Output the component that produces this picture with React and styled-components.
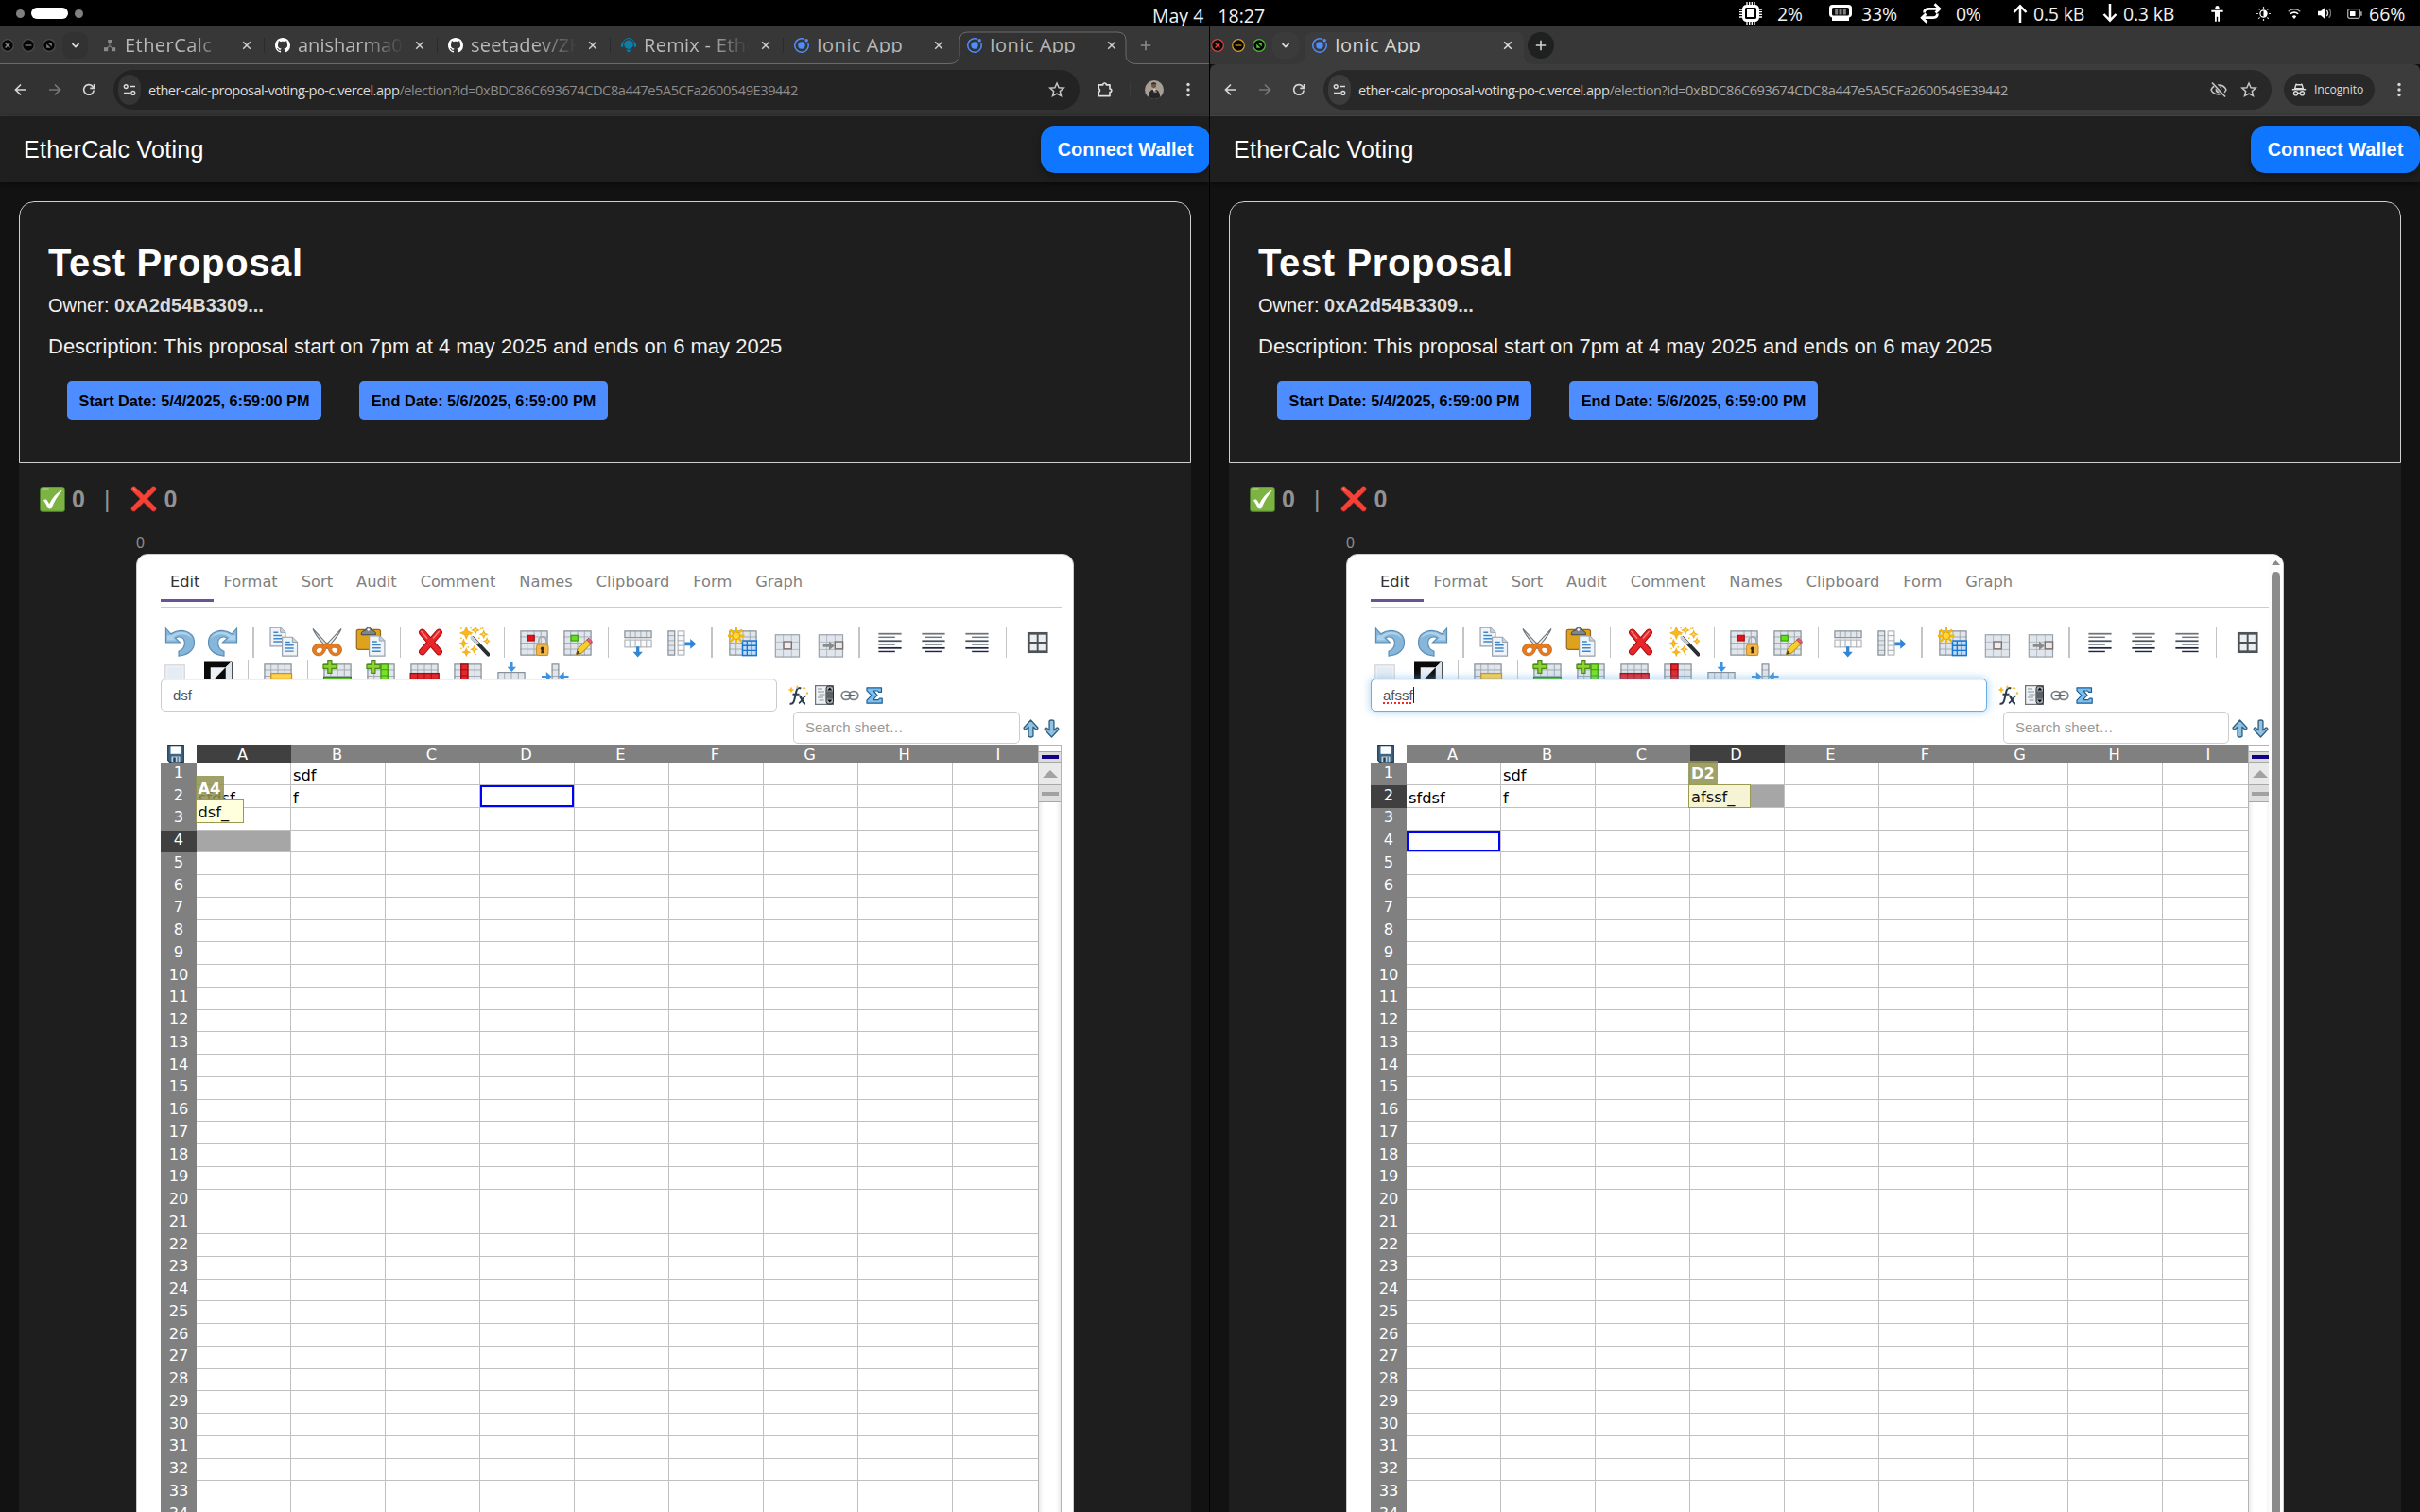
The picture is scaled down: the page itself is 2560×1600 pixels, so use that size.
import React from "react";
import styled, { createGlobalStyle, css } from "styled-components";

const Global = createGlobalStyle`
  *, *::before, *::after { box-sizing: border-box; }
  html, body { margin: 0; padding: 0; background: #000; overflow: hidden; }
  svg { display: block; flex: none; }
`;

const uiFont = `"Open Sans", "Noto Sans", sans-serif`;
const appFont = `"Liberation Sans", Arial, sans-serif`;
const sheetFont = `"DejaVu Sans", Verdana, sans-serif`;

/* ---------- desktop ---------- */

const Desktop = styled.div`
  width: 2560px;
  height: 1600px;
  display: flex;
  flex-direction: column;
  overflow: hidden;
  background: #000;
`;

const TopBar = styled.div`
  height: 28px;
  flex: none;
  display: flex;
  align-items: center;
  background: #000;
  color: #f2f2f2;
  font: 400 19.5px/28px ${uiFont};
  white-space: pre;
`;

const Workspaces = styled.div`
  width: 1219px;
  padding-left: 17px;
  display: flex;
  align-items: center;
  gap: 7px;
`;

const Dot = styled.span`
  width: ${(p) => (p.$active ? 39 : 9)}px;
  height: ${(p) => (p.$active ? 12 : 9)}px;
  border-radius: 6px;
  background: ${(p) => (p.$active ? "#fff" : "#808080")};
`;

const Clock = styled.div`
  width: 621px;
  line-height: 33px;
  height: 28px;
  display: flex;
  gap: 15px;
`;

const StatusItem = styled.div`
  width: ${(p) => p.$w}px;
  height: 28px;
  display: flex;
  align-items: center;
  gap: ${(p) => p.$gap || 0}px;
  line-height: 27px;
  letter-spacing: ${(p) => p.$ls || 0}px;
`;

const Windows = styled.div`
  flex: 1;
  display: flex;
  min-height: 0;
`;

const Window = styled.div`
  width: 1280px;
  display: flex;
  flex-direction: column;
  overflow: hidden;
  background: #121212;
  border-right: ${(p) => (p.$active ? "none" : "1px solid #000")};
`;

/* ---------- browser chrome ---------- */

const TabStrip = styled.div`
  height: 40px;
  flex: none;
  display: flex;
  align-items: stretch;
  background: #373737;
  border-bottom: ${(p) => (p.$active ? "none" : "1px solid #6a6a6a")};
`;

const WindowControls = styled.div`
  width: 66px;
  padding-left: 1px;
  display: flex;
  align-items: center;
  gap: 8px;
`;

const SearchTabs = styled.div`
  width: ${(p) => (p.$active ? 28 : 27)}px;
  height: 28px;
  margin: 6px ${(p) => (p.$active ? 4 : 5)}px 0 0;
  border-radius: 9px;
  background: ${(p) => (p.$active ? "#3b3b3b" : "#323232")};
  display: flex;
  align-items: center;
  justify-content: center;
`;

const TabBox = styled.div`
  width: ${(p) => p.$w}px;
  display: flex;
  align-items: center;
  padding-left: 10px;
  position: relative;
  ${(p) =>
    p.$sep &&
    css`
      &::after {
        content: "";
        width: 1px;
        height: 16px;
        margin-left: 9px;
        background: #2b2b2b;
      }
    `}
`;

const TabShape = styled.svg`
  position: absolute;
  left: -10px;
  top: 0;
`;

const TabTitle = styled.div`
  width: ${(p) => p.$w}px;
  height: 28px;
  margin-left: 8px;
  overflow: hidden;
  white-space: pre;
  color: ${(p) => (p.$bright ? "#d6d6d6" : "#b8b8b8")};
  font: 400 20px/28px ${uiFont};
  letter-spacing: ${(p) => p.$ls ?? 0.5}px;
  position: relative;
  ${(p) =>
    p.$fade &&
    css`
      mask-image: linear-gradient(90deg, #000 62%, transparent 100%);
    `}
  span {
    display: block;
    height: 22px;
    overflow: hidden;
  }
`;

const TabClose = styled.div`
  width: 18px;
  margin-left: 8px;
  display: flex;
  justify-content: center;
  position: relative;
`;

const NewTab = styled.div`
  width: 28px;
  height: 28px;
  margin: 6px 0 0 ${(p) => (p.$active ? 4 : 1)}px;
  border-radius: 14px;
  background: ${(p) => (p.$active ? "#1f2020" : "transparent")};
  display: flex;
  align-items: center;
  justify-content: center;
`;

const AddressBar = styled.div`
  height: 55px;
  flex: none;
  display: flex;
  align-items: center;
  background: ${(p) => (p.$active ? "#3c3c3c" : "#323232")};
  border-bottom: 1px solid ${(p) => (p.$active ? "#4c4c4c" : "#393939")};
  border-radius: ${(p) => (p.$active ? "7px 7px 0 0" : "0")};
`;

const NavButtons = styled.div`
  width: 120px;
  padding-left: 12px;
  display: flex;
  gap: 16px;
`;

const Omnibox = styled.div`
  width: ${(p) => p.$w}px;
  height: 42px;
  border-radius: 21px;
  padding: 0 14px 0 5px;
  background: ${(p) => (p.$active ? "#282828" : "#232323")};
  display: flex;
  align-items: center;
`;

const SiteInfo = styled.div`
  width: 24px;
  height: 32px;
  border-radius: 12px / 14px;
  background: ${(p) => (p.$active ? "#3c3c3c" : "#353535")};
  display: flex;
  align-items: center;
  justify-content: center;
`;

const Url = styled.div`
  flex: 1;
  padding-left: 8px;
  white-space: nowrap;
  color: ${(p) => (p.$active ? "#a6a6a6" : "#8c8c8c")};
  font: 400 14.6px/20px ${uiFont};
  letter-spacing: -0.43px;
  b {
    font-weight: 400;
    color: #dcdcdc;
    letter-spacing: -0.5px;
  }
`;

const OmniActions = styled.div`
  display: flex;
  gap: 12px;
`;

const ToolActions = styled.div`
  flex: 1;
  display: flex;
  align-items: center;
  padding-left: ${(p) => p.$pl}px;
`;

const ToolSep = styled.span`
  width: 1px;
  height: 16px;
  margin: 0 15px 0 16px;
  background: #3b3b3b;
`;

const Gap = styled.span`
  width: ${(p) => p.$w}px;
`;

const Incognito = styled.div`
  width: 96px;
  height: 34px;
  border-radius: 17px;
  padding-left: 8px;
  display: flex;
  align-items: center;
  gap: 8px;
  background: #282828;
  color: #d8d8d8;
  font: 400 12.25px/34px ${uiFont};
  letter-spacing: -0.1px;
`;

/* ---------- web page ---------- */

const AppHeader = styled.div`
  height: 70px;
  flex: none;
  display: flex;
  align-items: center;
  justify-content: space-between;
  padding-left: 25px;
  background: #1f1f1f;
  color: #fff;
  font: 400 25px/30px ${appFont};
  letter-spacing: 0.28px;
  box-shadow: 0 2px 6px rgba(0, 0, 0, 0.45);
`;

const WalletButton = styled.div`
  height: 50px;
  width: 179px;
  margin-right: ${(p) => (p.$active ? 0 : -1)}px;
  border-radius: 15px;
  background: #0f76ff;
  box-shadow: 0 4px 10px rgba(0, 0, 0, 0.3);
  text-align: center;
  font: 700 20px/50px ${appFont};
  letter-spacing: 0;
`;

const Page = styled.div`
  width: 1240px;
  margin: 20px 0 0 20px;
  flex: 1;
  min-height: 0;
  overflow: hidden;
  background: #1e1e1e;
  border-radius: 16px 16px 0 0;
  font-family: ${appFont};
`;

const Proposal = styled.div`
  height: 277px;
  border: 1px solid #d0d0d0;
  border-radius: 16px 16px 0 0;
  padding: 40px 30px 0;
  color: #f0f0f0;
`;

const Title = styled.div`
  font-weight: 700;
  font-size: 40px;
  line-height: 48px;
  letter-spacing: 0.625px;
  color: #fff;
`;

const Owner = styled.div`
  margin-top: 9px;
  font-size: 20px;
  line-height: 24px;
  b {
    color: #dadada;
  }
`;

const Description = styled.div`
  margin-top: 18px;
  font-size: 22px;
  line-height: 28px;
`;

const Dates = styled.div`
  margin: 22px 0 0 20px;
  display: flex;
  gap: 40px;
`;

const DateBadge = styled.div`
  width: ${(p) => p.$w}px;
  height: 41px;
  border-radius: 5px;
  background: #4d8dff;
  color: #000;
  text-align: center;
  white-space: nowrap;
  font-weight: 700;
  font-size: 16.25px;
  line-height: 42px;
`;

const Votes = styled.div`
  height: 30px;
  margin: 23px 0 0 22px;
  display: flex;
  align-items: center;
  color: #929292;
  font-weight: 700;
  font-size: 25px;
  line-height: 30px;
`;

const VoteText = styled.span`
  margin: 0 ${(p) => p.$r || 0}px 0 ${(p) => p.$l || 0}px;
  font-weight: ${(p) => (p.$thin ? 400 : 700)};
`;

const Counter = styled.div`
  margin: 22px 0 1px 124px;
  font-size: 16px;
  line-height: 20px;
  color: #8c8c8c;
`;

const Panel = styled.div`
  width: 992px;
  height: 1030px;
  margin-left: 124px;
  border: 1px solid #ccc;
  border-radius: 12px;
  overflow: hidden;
  background: #fff;
  display: flex;
`;

const PanelBody = styled.div`
  width: ${(p) => (p.$scroll ? 975 : 990)}px;
  overflow: hidden;
  padding-left: 25px;
`;

const PageScroll = styled.div`
  width: 15px;
  background: #fcfcfc;
  display: flex;
  flex-direction: column;
  align-items: center;
  padding: 6px 1px 0 0;
`;

const Thumb = styled.div`
  width: 9px;
  height: 1010px;
  margin-top: 7px;
  border-radius: 5px;
  background: #8b8b8b;
`;

const Menu = styled.div`
  width: 953px;
  height: 56px;
  border-bottom: 1px solid #ccc;
  display: flex;
`;

const MenuTab = styled.div`
  height: 50px;
  padding: 19px 15px 0 10px;
  border-bottom: 3px solid ${(p) => (p.$on ? "#6a5293" : "transparent")};
  color: ${(p) => (p.$on ? "#333" : "#808080")};
  font: 400 16.25px/20px ${sheetFont};
`;

const Toolbar = styled.div`
  width: 961px;
  height: 75px;
  margin-left: -8px;
  padding-top: 19px;
  overflow: hidden;
`;

const ToolRow = styled.div`
  height: 35px;
  padding-left: ${(p) => p.$pl || 0}px;
  display: flex;
`;

const Tool = styled.div`
  width: 46px;
  height: 35px;
  display: flex;
  align-items: center;
  justify-content: center;
`;

const ToolDivider = styled.div`
  width: ${(p) => p.$w}px;
  height: 35px;
  display: flex;
  justify-content: center;
  align-items: center;
  &::after {
    content: "";
    width: 1.25px;
    height: 33px;
    background: #c4c4c4;
  }
`;

const FormulaRow = styled.div`
  height: 35px;
  display: flex;
  align-items: center;
  gap: 7px;
  position: relative;
`;

const Field = styled.div`
  width: ${(p) => p.$w}px;
  height: ${(p) => p.$h}px;
  margin-right: ${(p) => p.$mr || 0}px;
  padding-left: 12px;
  border: 1px solid ${(p) => (p.$focus ? "#66afe9" : "#ccc")};
  border-radius: 5px;
  background: #fff;
  box-shadow: inset 0 1px 1px rgba(0, 0, 0, 0.075)
    ${(p) => (p.$focus ? ", 0 0 10px rgba(102,175,233,0.6)" : "")};
  display: flex;
  align-items: center;
  color: ${(p) => (p.$hint ? "#999" : "#555")};
  font: 400 15px/18px ${appFont};
`;

const Spell = styled.span`
  text-decoration: underline dotted #f22 1.5px;
  text-underline-offset: 3px;
`;

const Caret = styled.span`
  width: 1px;
  height: 17px;
  background: #222;
`;

const SearchRow = styled.div`
  height: 35px;
  padding-left: 669px;
  display: flex;
  align-items: flex-start;
`;

const Arrows = styled.div`
  margin: 8px 0 0 3px;
  display: flex;
  gap: 5px;
`;

/* ---------- spreadsheet ---------- */

const SheetWrap = styled.div`
  width: 953px;
  display: flex;
`;

const Sheet = styled.div`
  width: 928px;
  position: relative;
  font: 400 16.25px/19px ${sheetFont};
`;

const SheetRow = styled.div`
  height: ${(p) => p.$h}px;
  display: grid;
  grid-template-columns: 38px repeat(8, 100px) 90px;
`;

const Corner = styled.div`
  padding-left: 7px;
`;

const ColHead = styled.div`
  background: ${(p) => (p.$on ? "#404040" : "#808080")};
  color: #fff;
  text-align: center;
  padding-right: ${(p) => (p.$last ? 0 : 3)}px;
  padding-left: ${(p) => (p.$last ? 6 : 0)}px;
  line-height: 21px;
  height: 19px;
`;

const RowHead = styled.div`
  background: ${(p) => (p.$on ? "#404040" : "#808080")};
  color: #fff;
  text-align: center;
  line-height: ${(p) => p.$lh}px;
`;

const Cell = styled.div`
  border-right: ${(p) => (p.$last ? "none" : "1px solid #c0c0c0")};
  border-bottom: 1px solid #c0c0c0;
  padding: 4px 0 0 2px;
  color: #000;
  overflow: hidden;
  white-space: nowrap;
  background: ${(p) => (p.$on ? "#a6a6a6" : "#fff")};
  box-shadow: ${(p) => (p.$peer ? "inset 0 0 0 2px #0000ff" : "none")};
`;

const EditHint = styled.div`
  position: absolute;
  left: ${(p) => p.$x}px;
  top: ${(p) => p.$y}px;
`;

const HintName = styled.div`
  width: ${(p) => p.$w}px;
  height: 25px;
  padding-left: 3px;
  background: rgba(144, 144, 80, 0.86);
  color: #fff;
  font-weight: 700;
  line-height: 28px;
`;

const HintText = styled.div`
  width: ${(p) => p.$w}px;
  height: 25px;
  padding-left: 2px;
  border: 1px solid #999950;
  background: ${(p) => p.$bg};
  color: #111;
  line-height: 26px;
`;

const SheetScroll = styled.div`
  width: 25px;
  border: solid #b4b4b4;
  border-width: 0 1px;
  background: linear-gradient(90deg, #ececec 0, #fff 5px, #fff 18px, #ececec 100%);
`;

const ScrollPart = styled.div`
  height: ${(p) => p.$h}px;
  border-bottom: 1px solid #a8a8a8;
  border-top: ${(p) => (p.$top ? "1px solid #b4b4b4" : "none")};
  background: ${(p) => p.$bg};
  display: flex;
  align-items: center;
  justify-content: center;
`;

const ScrollBar = styled.span`
  width: 18px;
  height: 4px;
  background: ${(p) => p.$c};
`;

/* ---------- drawings ---------- */

const Svg = ({ w = 16, h = w, vb, children, ...r }) => (
  <svg width={w} height={h} viewBox={vb || `0 0 ${w} ${h}`} fill="none" {...r}>
    {children}
  </svg>
);

const Control = ({ kind, active }) => {
  const c = active ? { x: "#e0443e", m: "#dea123", z: "#4fbf30" }[kind] : "#4e4e4e";
  return (
    <Svg w={14} vb="0 0 14 14">
      <circle cx="7" cy="7" r="6.3" fill="#050505" stroke={c} strokeWidth="1.2" />
      {kind === "x" && <path d="M4.6 4.6l4.8 4.8M9.4 4.6L4.6 9.4" stroke={active ? c : "#8a8a8a"} strokeWidth="1.4" />}
      {kind === "m" && <path d="M3.6 7h6.8" stroke={active ? "#b07c12" : "#6a6a6a"} strokeWidth="1.5" />}
      {kind === "z" && <path d="M5.4 4.2h4.4v4.4zM4.2 5.4v4.4h4.4z" fill={active ? c : "#777"} />}
    </Svg>
  );
};

const Chevron = () => (
  <Svg w={12}><path d="M2.5 4.2L6 7.6l3.5-3.4" stroke="#dedede" strokeWidth="1.8" /></Svg>
);
const Cross = ({ c = "#cfcfcf" }) => (
  <Svg w={10}><path d="M1.2 1.2l7.6 7.6M8.8 1.2L1.2 8.8" stroke={c} strokeWidth="1.5" /></Svg>
);
const Plus = ({ c }) => (
  <Svg w={12}><path d="M6 .8v10.4M.8 6h10.4" stroke={c} strokeWidth="1.6" /></Svg>
);

const Favicon = ({ kind }) => {
  if (kind === "github")
    return (
      <Svg w={16}>
        <path
          fill="#fff"
          fillRule="evenodd"
          d="M8 0C3.58 0 0 3.58 0 8c0 3.54 2.29 6.53 5.47 7.59.4.07.55-.17.55-.38 0-.19-.01-.82-.01-1.49-2.01.37-2.53-.49-2.69-.94-.09-.23-.48-.94-.82-1.13-.28-.15-.68-.52-.01-.53.63-.01 1.08.58 1.23.82.72 1.21 1.87.87 2.33.66.07-.52.28-.87.51-1.07-1.78-.2-3.64-.89-3.64-3.95 0-.87.31-1.59.82-2.15-.08-.2-.36-1.02.08-2.12 0 0 .67-.21 2.2.82.64-.18 1.32-.27 2-.27s1.36.09 2 .27c1.53-1.04 2.2-.82 2.2-.82.44 1.1.16 1.92.08 2.12.51.56.82 1.27.82 2.15 0 3.07-1.87 3.75-3.65 3.95.29.25.54.73.54 1.48 0 1.07-.01 1.93-.01 2.2 0 .21.15.46.55.38A8.01 8.01 0 0016 8c0-4.42-3.58-8-8-8z"
        />
      </Svg>
    );
  if (kind === "remix")
    return (
      <Svg w={16}>
        <circle cx="8" cy="7.2" r="4.800" fill="#0a7ea8" />
        <path d="M1.600 8V7a6.400 6.400 0 0112.800 0v1" stroke="#0a7ea8" strokeWidth="1" />
        <rect x="0" y="5.500" width="2.200" height="4.500" rx="1" fill="#0a7ea8" />
        <rect x="13.800" y="5.500" width="2.200" height="4.500" rx="1" fill="#0a7ea8" />
        <path d="M5 12.800h6l-3 2.600z" fill="#0a7ea8" />
      </Svg>
    );
  if (kind === "tree")
    return (
      <Svg w={16}>
        <path d="M8 4v5M8 8.500L4 12M8 8.500l4 3.500" stroke="#777" strokeWidth="1.200" />
        <rect x="6.200" y="2" width="3.800" height="4" fill="#8a8a8a" />
        <rect x="2" y="10.200" width="4.200" height="4" fill="#8a8a8a" />
        <rect x="10" y="10.200" width="4.200" height="4" fill="#8a8a8a" />
      </Svg>
    );
  return (
    <Svg w={16}>
      <circle cx="8" cy="8" r="3.700" fill="#4d8dff" />
      <path d="M11.200 1.600A7.200 7.200 0 1014.500 5" stroke="#4d8dff" strokeWidth="1.500" />
      <circle cx="13.200" cy="2.800" r="1.700" fill="#4d8dff" />
    </Svg>
  );
};

const Back = ({ c, flip }) => (
  <Svg w={20}>
    <path
      transform={flip ? "translate(20 0) scale(-1 1)" : undefined}
      d="M16 10H4.800M10 4.500L4.500 10l5.500 5.500"
      stroke={c}
      strokeWidth="1.700"
    />
  </Svg>
);
const Reload = ({ c }) => (
  <Svg w={20}>
    <path d="M15.200 10.500A5.300 5.300 0 1113.800 6.300l1.400 1.400" stroke={c} strokeWidth="1.700" />
    <path d="M15.600 4v4.300h-4.300" stroke={c} strokeWidth="1.700" />
  </Svg>
);
const Tune = () => (
  <Svg w={14}>
    <circle cx="3.200" cy="3.600" r="1.900" stroke="#dcdcdc" strokeWidth="1.400" />
    <circle cx="10.800" cy="10.400" r="1.900" stroke="#dcdcdc" strokeWidth="1.400" />
    <path d="M7 3.600h6M1 10.400h6" stroke="#dcdcdc" strokeWidth="1.500" />
  </Svg>
);
const Star = () => (
  <Svg w={20}>
    <path d="M10 3l2.100 4.700 5.100.5-3.850 3.400 1.150 5L10 14l-4.500 2.600 1.150-5L2.800 8.200l5.100-.5z" stroke="#c4c4c4" strokeWidth="1.500" />
  </Svg>
);
const Puzzle = () => (
  <Svg w={20}>
    <path d="M3.200 4.800H7.700a1.800 1.800 0 013.600 0H15v4.200a1.800 1.800 0 010 3.600v4H3.200v-4.200a1.900 1.900 0 000-3.600z" stroke="#dedede" strokeWidth="1.700" strokeLinejoin="round" />
  </Svg>
);
const Dots = () => (
  <Svg w={20}>
    {[4.5, 10, 15.5].map((y) => <circle key={y} cx="10" cy={y} r="1.700" fill="#d8d8d8" />)}
  </Svg>
);
const Avatar = () => (
  <Svg w={20}>
    <clipPath id="av"><circle cx="10" cy="10" r="10" /></clipPath>
    <g clipPath="url(#av)">
      <rect width="20" height="20" fill="#a79f94" />
      <path d="M3.500 20c.5-7 2-10.500 6.500-10.500S16 13 16.500 20z" fill="#23262a" />
      <circle cx="9.600" cy="5.400" r="2.500" fill="#6b5548" />
      <path d="M6.800 4.600c0-3 5.600-3 5.600 0l-1-.8H8z" fill="#1c1a1a" />
      <path d="M8.200 9l2 4 1.800-4z" fill="#c9c5c0" />
      <path d="M9 13l3-3 1 3z" fill="#8f7767" />
    </g>
  </Svg>
);
const EyeOff = () => (
  <Svg w={20}>
    <path d="M2 10c3-6.500 13-6.500 16 0-3 6.500-13 6.500-16 0z" stroke="#c4c4c4" strokeWidth="1.600" />
    <circle cx="10" cy="10" r="3.400" fill="#c4c4c4" />
    <path d="M3.500 1.500l14 16" stroke="#282828" strokeWidth="4" />
    <path d="M3 2.500l14 15" stroke="#c4c4c4" strokeWidth="1.700" />
  </Svg>
);
const Spy = () => (
  <Svg w={16}>
    <path d="M5 2.200l1.300.6h3.400l1.300-.6 1.400 4.600H3.600z" stroke="#dcdcdc" strokeWidth="1.400" strokeLinejoin="round" />
    <path d="M.8 7.700h14.400" stroke="#dcdcdc" strokeWidth="1.500" />
    <circle cx="4.600" cy="11.800" r="2.100" stroke="#dcdcdc" strokeWidth="1.400" />
    <circle cx="11.400" cy="11.800" r="2.100" stroke="#dcdcdc" strokeWidth="1.400" />
    <path d="M6.700 11.500h2.600" stroke="#dcdcdc" strokeWidth="1.300" />
  </Svg>
);

const Cpu = () => (
  <Svg w={24}>
    <rect x="4.500" y="4.500" width="15" height="15" rx="3" stroke="#fff" strokeWidth="3" />
    <rect x="8" y="8" width="8" height="8" fill="#fff" />
    <path d="M8 0v4M10.700 0v4M13.300 0v4M16 0v4M8 20v4M10.700 20v4M13.300 20v4M16 20v4M0 8h4M0 10.700h4M0 13.300h4M0 16h4M20 8h4M20 10.700h4M20 13.300h4M20 16h4" stroke="#fff" strokeWidth="1.300" />
  </Svg>
);
const Ram = () => (
  <Svg w={24}>
    <path d="M3.500 3h17A3.500 3.500 0 0124 6.500V13a3.500 3.500 0 01-3 3.400V20H3v-3.600A3.500 3.500 0 010 13V6.500A3.500 3.500 0 013.500 3z" fill="#fff" />
    <rect x="3" y="6" width="18" height="8.500" rx="1.500" fill="#0a0a0a" />
    <path d="M7.700 7.500v6M12 7.500v6M16.300 7.500v6" stroke="#808080" strokeWidth="3" />
  </Svg>
);
const Swap = () => (
  <Svg w={23} h={22}>
    <path id="swapArrow" d="M4.500 10.500C4.500 7.500 6.500 6.300 10 6.300h10.500M15.500 1.300l5.300 4.900-4.300 4.300" stroke="#fff" strokeWidth="2.700" />
    <path transform="rotate(180 11.500 11)" d="M4.500 10.500C4.500 7.500 6.500 6.300 10 6.300h10.500M15.500 1.300l5.300 4.900-4.300 4.300" stroke="#fff" strokeWidth="2.700" />
  </Svg>
);
const NetArrow = ({ down }) => (
  <Svg w={16} h={20}>
    <path
      transform={down ? "translate(0 20) scale(1 -1)" : undefined}
      d="M8 20V3M1.500 9L8 2.200 14.500 9"
      stroke="#fff"
      strokeWidth="2.500"
    />
  </Svg>
);
const Person = () => (
  <Svg w={13} h={17}>
    <circle cx="6.500" cy="2.200" r="2.100" fill="#fff" />
    <path d="M.3 4.800h12.400v2H9v10H7.200v-5H5.800v5H4v-10H.3z" fill="#fff" />
  </Svg>
);
const Sun = () => (
  <Svg w={15}>
    <circle cx="7.500" cy="7.500" r="3.600" stroke="#fff" strokeWidth="1.200" />
    <path d="M7.500 3.900a3.600 3.600 0 010 7.200z" fill="#fff" />
    <g stroke="#ccc" strokeWidth="1.200">
      <path d="M7.500 0v2M7.500 13v2M0 7.500h2M13 7.500h2M2.200 2.200l1.400 1.400M11.400 11.400l1.400 1.400M12.800 2.200l-1.400 1.400M3.600 11.400l-1.400 1.400" />
    </g>
  </Svg>
);
const Wifi = () => (
  <Svg w={14} h={12}>
    <path d="M.7 4.200a9 9 0 0112.600 0" stroke="#a8a8a8" strokeWidth="1.500" />
    <path d="M2.900 6.800a5.800 5.800 0 018.200 0" stroke="#fff" strokeWidth="1.600" />
    <path d="M7 12L4.800 9.400a3.200 3.200 0 014.400 0z" fill="#fff" />
  </Svg>
);
const Volume = () => (
  <Svg w={14} h={12}>
    <path d="M0 3.800h3L7 .3v11.400L3 8.200H0z" fill="#fff" />
    <path d="M9.200 3a4 4 0 010 6" stroke="#ddd" strokeWidth="1.500" />
    <path d="M11.700 1.200a7 7 0 010 9.600" stroke="#777" strokeWidth="1.300" />
  </Svg>
);
const Battery = () => (
  <Svg w={16} h={11}>
    <rect x=".7" y=".7" width="12.600" height="9.600" rx="1.800" stroke="#aaa" strokeWidth="1.300" />
    <rect x="3" y="3" width="5.500" height="5" fill="#fff" />
    <path d="M14.900 3.300v4.400" stroke="#aaa" strokeWidth="1.600" />
  </Svg>
);

const CheckEmoji = () => (
  <Svg w={27}>
    <rect x=".3" y=".3" width="26.400" height="26.400" rx="2.600" fill="#5c9e31" />
    <rect x="1" y="0.600" width="25" height="25" rx="2.400" fill="#7cb342" />
    <path d="M2 3.200c3-1.600 6-1.400 7.500-1" stroke="#aed581" strokeWidth="1.200" />
    <path d="M4 14.500c1.600-1.600 3.200-1 4 .2l2.200 3.600C13 12.500 17 7.200 22.500 4.200c.8-.3 1 .3.600.9-4 5-7.500 10-10.400 17.400-.6 1.200-3.600 1.200-4.200 0C7.500 20 6 17.300 4 14.500z" fill="#fff" />
  </Svg>
);
const CrossEmoji = () => (
  <Svg w={28}>
    <path d="M3.500 3.500l21 21M24.500 3.500l-21 21" stroke="#d32f2f" strokeWidth="5.600" strokeLinecap="round" />
    <path d="M3.500 3.200l21 21M24.500 3.200l-21 21" stroke="#f44336" strokeWidth="4.600" strokeLinecap="round" />
    <path d="M3.200 2.600l2.600 2.600" stroke="#ff8a80" strokeWidth="1.200" strokeLinecap="round" />
  </Svg>
);

/* Grid used as the base of most spreadsheet tool icons */
const Grid = ({ x = 1, y = 4, w = 30, h = 27, c = 4, r = 4, line = "#a2a9b1", fill = "#e0e6ec", edge = "#878e96" }) => {
  let d = "";
  for (let i = 1; i < c; i++) d += `M${x + (w * i) / c} ${y}v${h}`;
  for (let i = 1; i < r; i++) d += `M${x} ${y + (h * i) / r}h${w}`;
  return (
    <>
      <rect x={x} y={y} width={w} height={h} fill={fill} />
      <path d={d} stroke={line} strokeWidth="1" />
      <rect x={x + 0.5} y={y + 0.5} width={w - 1} height={h - 1} stroke={edge} strokeWidth="1.200" />
    </>
  );
};

const AlignIcon = ({ a }) => (
  <>
    {[25, 18, 25, 18, 25, 18].map((w, i) => (
      <rect
        key={i}
        x={a === "l" ? 4 : a === "r" ? 29 - w : 16.5 - w / 2}
        y={6.5 + i * 3.900}
        width={w}
        height={i % 2 ? 1.5 : 1.8}
        fill={i < 2 ? "#6d747b" : i < 4 ? "#4a5260" : "#1f2740"}
      />
    ))}
  </>
);

const GreenPlus = () => (
  <path d="M5.500 0h4.200v5H15v4.200H9.700v5H5.500v-5H.5V5h5z" fill="#8fd42c" stroke="#4c8a1c" strokeWidth="1.300" />
);

const toolArt = {
  undo: (
    <>
      <path d="M1 1.500V17h15.500l-5-5c4-2.500 10-1 10 5.500 0 5-2.500 7.500-6.500 9v5C25 30.500 32 25.500 32 17 32 4.500 17 .5 6.500 7.500z" fill="#86b6da" stroke="#5b8db5" strokeWidth="1.200" />
      <path d="M2.500 4v5l5 0C16 2.500 27 5 29.500 13 25 7 15 6 9 11.500l3 3H2.500z" fill="#b9d9ef" opacity=".8" />
    </>
  ),
  copy: (
    <>
      {[[1, 0], [14, 10.500]].map(([x, y]) => (
        <g key={x} transform={`translate(${x} ${y})`}>
          <path d="M.6.600h11L17 6v15H.6z" fill="#eef4fa" stroke="#94a0ac" strokeWidth="1.200" />
          <path d="M11.600.6V6H17" fill="#c9d4de" stroke="#94a0ac" strokeWidth="1" />
          <path d="M4 6h5M4 9.300h9M4 12.600h9M4 15.900h9" stroke="#3f86c8" strokeWidth="1.500" />
        </g>
      ))}
    </>
  ),
  cut: (
    <>
      <path d="M.5 2L19 21.500l-3 1.800C10 16 3 9 .5 2z" fill="#d8dde1" stroke="#70777d" strokeWidth="1.100" />
      <path d="M31.500 2L13 21.500l3 1.800C22 16 29 9 31.500 2z" fill="#eef0f2" stroke="#70777d" strokeWidth="1.100" />
      <g stroke="#b5560c" strokeWidth=".7">
        <path fill="#e77b1e" fillRule="evenodd" d="M16 17l4 2.500c6-3 12 0 12 5.500s-7 8-11 5-3-6.500-5-7-1 4-5 7-11 .5-11-5 6-8.500 12-5.500zM4 26c0 3 4 3.500 6 1s1-4-1-4.500-5 1-5 3.500zM28 26c0 3-4 3.500-6 1s-1-4 1-4.500 5 1 5 3.500z" />
      </g>
    </>
  ),
  paste: (
    <>
      <rect x=".8" y="3" width="26" height="21.500" rx="2" fill="#dea21f" stroke="#96691a" strokeWidth="1.300" />
      <path d="M6 8.500V6.500C7 3.500 11 4.500 11 3c0-3.500 5.500-3.500 5.500 0 0 1.500 4 .5 5 3.500v2z" fill="#7d868d" stroke="#3d4347" strokeWidth="1" />
      <circle cx="13.700" cy="3" r="1.300" fill="#fff" />
      <g transform="translate(14 9)">
        <path d="M.6.600h11L17.400 6v16.500H.6z" fill="#eef4fa" stroke="#94a0ac" strokeWidth="1.200" />
        <path d="M11.600.6V6h5.600" fill="#c9d4de" stroke="#94a0ac" strokeWidth="1" />
        <path d="M4 7h5M4 10.500h9M4 14h9M4 17.500h9" stroke="#3f86c8" strokeWidth="1.500" />
      </g>
    </>
  ),
  del: (
    <>
      <path d="M6.500 6l18 21M24.500 6l-18 21" stroke="#a80d10" strokeWidth="7.600" strokeLinecap="round" />
      <path d="M6.500 6l18 21M24.500 6l-18 21" stroke="#e8262a" strokeWidth="5.500" strokeLinecap="round" />
      <path d="M5.500 5l6 7M24.500 5l-6 7" stroke="#ff8484" strokeWidth="1.500" strokeLinecap="round" />
    </>
  ),
  wand: (
    <>
      <path d="M14 12l17 18" stroke="#2b2f33" strokeWidth="4" strokeLinecap="round" />
      <path d="M13 11.500l6 6" stroke="#c8cdd2" strokeWidth="3.600" strokeLinecap="round" />
      {[[7, 6.500, 6], [17, 3.500, 3.500], [26, 8, 3.500], [4, 18, 4], [15.500, 24.500, 3], [29.500, 15.500, 3], [7, 27.500, 3.500]].map(([x, y, s], i) => (
        <path key={i} d={`M${x} ${y - s}l${s * 0.3} ${s * 0.7} ${s * 0.7} ${s * 0.3}-${s * 0.7} ${s * 0.3}-${s * 0.3} ${s * 0.7}-${s * 0.3}-${s * 0.7}-${s * 0.7}-${s * 0.3} ${s * 0.7}-${s * 0.3}z`} fill={i % 3 ? "#ffe28a" : "#fbb91e"} stroke="#f3b321" strokeWidth="1.300" />
      ))}
      {[[1.500, 1.500], [12, 1], [23, 2], [1.500, 12], [12, 8], [21, 12], [9, 22], [17, 30], [1.500, 23.500], [25, 1.500]].map(([x, y], i) => (
        <circle key={i} cx={x} cy={y} r=".9" fill="#f6bd2c" />
      ))}
    </>
  ),
  lock: (
    <>
      <Grid />
      <rect x="8.800" y="9" width="7.500" height="6" fill="#e0141a" stroke="#9a0c10" />
      <path d="M21 20v-5a4.200 4.200 0 018.400 0v5" stroke="#a4aab0" strokeWidth="1.800" />
      <rect x="18.500" y="19" width="13" height="12" rx="2.500" fill="#f0b64a" stroke="#c58a26" />
      <circle cx="25" cy="23.500" r="1.900" fill="#3c2a08" />
      <path d="M24.100 24h1.800l.6 4.500h-3z" fill="#3c2a08" />
    </>
  ),
  pencil: (
    <>
      <Grid />
      <rect x="8.800" y="9" width="7.500" height="6" fill="#63e01a" stroke="#2f8a0c" />
      <path d="M14.500 30l1.500-6 11-11 4.500 4.500-11 11z" fill="#f6cf2d" stroke="#a5781a" />
      <path d="M26 14l2-2 4 4-2 2z" fill="#ef5c7a" stroke="#b53a55" />
      <path d="M14.500 30l1.300-4.500 3 3.200z" fill="#4a3b22" />
    </>
  ),
  mergeDown: (
    <>
      <Grid y={4} h={8} r={1} c={5} />
      <Grid y={13.500} h={9} r={1} c={5} fill="#fafafa" edge="#b0b5ba" />
      <path d="M14 21.500h3.400V27H21l-5.300 6-5.300-6H14z" fill="#2f86d6" />
    </>
  ),
  splitRight: (
    <>
      <Grid x={1} y={4} w={8} h={27} c={1} r={5} />
      <Grid x={11.500} y={4} w={8} h={27} c={1} r={5} fill="#fafafa" edge="#b0b5ba" />
      <path d="M19.500 16.500h6V13l6.500 5.500-6.500 5.500v-3.700h-6z" fill="#2f86d6" />
    </>
  ),
  newGrid: (
    <>
      <Grid x={2} w={30} />
      <rect x="16.500" y="15" width="15.300" height="16" fill="#bfdcf5" stroke="#1a74d0" strokeWidth="1.600" />
      <path d="M16.500 20.300h15M16.500 25.600h15M21.500 15v16M26.500 15v16" stroke="#1a74d0" strokeWidth="1.400" />
      <path d="M9.500.5v18M.5 9.500h18M3 3l13 13M16 3L3 16" stroke="#f6b900" strokeWidth="2.600" />
      <circle cx="9.500" cy="9.500" r="4" fill="#ffd83a" stroke="#e89a00" />
    </>
  ),
  cellIn: (
    <>
      <Grid x={4.500} y={8} w={27} h={25} c={3} r={3} line="#b4bac1" edge="#9ca2a9" />
      <rect x="14" y="16" width="8.500" height="8" fill="#eeeeee" stroke="#7a6e6e" strokeWidth="1.400" />
    </>
  ),
  cellMove: (
    <>
      <Grid x={4.500} y={8} w={27} h={25} c={3} r={3} line="#b4bac1" edge="#9ca2a9" />
      <rect x="22.500" y="16" width="8.500" height="8" fill="#e8e8e8" stroke="#7a6e6e" strokeWidth="1.400" />
      <path d="M9.500 19h6.500v-3.500l6 5-6 5V22H9.500z" fill="#8a8a8a" />
    </>
  ),
  alignL: <AlignIcon a="l" />,
  alignC: <AlignIcon a="c" />,
  alignR: <AlignIcon a="r" />,
  border: (
    <>
      <rect x="7" y="7" width="19.500" height="20" fill="#eceff1" stroke="#4d5257" strokeWidth="2.800" />
      <path d="M16.700 7v20M7 17h20" stroke="#4d5257" strokeWidth="2" />
    </>
  ),
  blank: (
    <>
      <rect x="5.500" y="5.500" width="21" height="21" fill="#f2f5f9" stroke="#ccd1d7" strokeWidth="1.200" />
      <rect x="7.500" y="7.500" width="17" height="17" fill="#e6ecf3" />
    </>
  ),
  invert: (
    <>
      <path d="M.5 1h30.500L.5 31z" fill="#0a0a0a" />
      <path d="M31 1v30H.5z" fill="#dfe6ee" />
      <path d="M31 1.500v30" stroke="#444" strokeWidth="1" />
      <path d="M7.500 8H24L7.500 24z" fill="#eef1f5" />
      <path d="M24 8v17H7.500z" fill="#0a0a0a" />
    </>
  ),
  rowYellow: (
    <>
      <Grid />
      <rect x="8.500" y="14.500" width="22.500" height="6" fill="#ffd24d" stroke="#c8912a" strokeWidth="1.300" />
    </>
  ),
  addRow: (
    <>
      <Grid />
      <rect x="1" y="18.500" width="30" height="5" fill="#52c22a" stroke="#2e7d14" />
      <GreenPlus />
    </>
  ),
  addCol: (
    <>
      <Grid />
      <rect x="16" y="4.500" width="7.500" height="26" fill="#7be02a" stroke="#3c9a14" strokeWidth="1.300" />
      <path d="M16 10.500h7.500M16 17h7.500" stroke="#3c9a14" />
      <GreenPlus />
    </>
  ),
  delRow: (
    <>
      <Grid />
      <rect x=".7" y="14.500" width="31" height="6" fill="#e5262b" stroke="#960e12" strokeWidth="1.300" />
      <path d="M8.500 15v5M16 15v5M23.500 15v5" stroke="#960e12" />
    </>
  ),
  delCol: (
    <>
      <Grid />
      <rect x="8.500" y="4.500" width="7.500" height="26" fill="#e5262b" stroke="#960e12" strokeWidth="1.300" />
      <path d="M8.500 10.500H16M8.500 17H16" stroke="#960e12" />
    </>
  ),
  rowHide: (
    <>
      <Grid y={13} h={10} r={1} />
      <path d="M15 2h2.600v5.500h3.600L16.300 13l-4.900-5.500H15z" fill="#3d93e0" />
    </>
  ),
  colHide: (
    <>
      <Grid x={12.500} y={4} w={8} h={27} c={1} r={4} />
      <path d="M1.500 17h5v-4l6 5-6 5v-4h-5zM31 17h-5v-4l-6 5 6 5v-4h5z" fill="#3d93e0" />
    </>
  ),
};
toolArt.redo = <g transform="translate(32 0) scale(-1 1)">{toolArt.undo}</g>;

const ToolIcon = ({ name }) => (
  <Tool>
    <Svg w={32} h={34} vb="-0.500 0 33 34">
      {toolArt[name]}
    </Svg>
  </Tool>
);

const Fx = () => (
  <Svg w={21}>
    <path d="M1.500 19.800c3.500.5 4.500-2 5.500-7l1.300-6c.8-3.500 2.500-4.300 5-3.300M4.500 9.800h7" stroke="#2b3d4d" strokeWidth="2" />
    <path d="M11.500 11.500c2.300 0 3 8 6.500 8" stroke="#2b3d4d" strokeWidth="2.400" />
    <path d="M18.500 11.300c-3 1-4.500 6.500-7.500 8" stroke="#2b3d4d" strokeWidth="1.600" />
    <g fill="#fbb91e">
      <path d="M3 1.500l1.100 2.400L6.500 5 4.100 6.100 3 8.500 1.900 6.100-.5 5l2.400-1.100zM9.500 0l.7 1.500 1.500.7-1.500.6-.7 1.500-.6-1.500L7.400 2.200l1.500-.7zM16.500.8l.8 1.700 1.500.7-1.500.7-.8 1.600-.8-1.600-1.500-.7 1.500-.7zM20 6.500l.7 1.400 1 .7-1 .7-.7 1.200-.7-1.200-1-.7 1-.7z" />
    </g>
  </Svg>
);
const DocScroll = () => (
  <Svg w={20} h={21}>
    <rect x=".6" y=".6" width="18.800" height="19.800" fill="#eef1f4" stroke="#6b7278" strokeWidth="1.200" />
    <path d="M3 4h5M3 7h7M4.500 10h6M3 13h6M4.500 16h5" stroke="#8894a0" strokeWidth="1.200" />
    <rect x="12" y="1" width="7.500" height="19" rx="2.500" fill="#a3a9af" stroke="#25292d" strokeWidth="1" />
    <path d="M13.300 5.500L15.800 2.600l2.500 2.900zM13.300 15.500l2.500 2.900 2.500-2.900z" fill="#0c0d0e" />
    <rect x="12.500" y="6.500" width="6.500" height="8" fill="#5b6269" />
  </Svg>
);
const Chain = () => (
  <Svg w={20} h={12}>
    <rect x="1.200" y="1.700" width="9.500" height="8.600" rx="4.300" stroke="#7d8489" strokeWidth="1.800" />
    <rect x="9.300" y="1.700" width="9.500" height="8.600" rx="4.300" stroke="#7d8489" strokeWidth="1.800" />
    <path d="M5.500 6h9" stroke="#5f666b" strokeWidth="2.200" strokeLinecap="round" />
  </Svg>
);
const Sigma = () => (
  <Svg w={18}>
    <path d="M1 .8h15.500v4.500h-3l-1-1.300H8l4 4.700-4.500 5H13l1.500-1.500h2.700v5H1v-3L6 8.800 1 3.800z" fill="#7fc0ec" stroke="#1f5f94" strokeWidth="1.200" strokeLinejoin="round" />
  </Svg>
);
const FindArrow = ({ down }) => (
  <Svg w={17} h={20} vb="1.500 0.500 17 20.500">
    <path
      transform={down ? "translate(0 21.500) scale(1 -1)" : undefined}
      d="M10 1.500l7.300 8c.8 1-.6 2.800-2 2l-2.800-2.500v9.500c0 2-5 2-5 0V9L4.700 11.500c-1.400.8-2.800-1-2-2z"
      fill="#8fc3e6"
      stroke="#34607f"
      strokeWidth="1.400"
      strokeLinejoin="round"
    />
  </Svg>
);
const Floppy = () => (
  <Svg w={18} h={19}>
    <path d="M.7.700h16.600v17.600H2.500L.7 16.500z" fill="#3d6584" stroke="#1e3a52" strokeWidth="1.200" />
    <rect x="3.500" y="1.300" width="11" height="8.500" fill="#fafcfd" />
    <rect x="4.500" y="12.500" width="9" height="5.800" fill="#c3cfd8" />
    <rect x="6.300" y="13.500" width="2.400" height="4.500" fill="#1e3a52" />
    <rect x="10.500" y="13" width="1.200" height="5" fill="#3d6584" />
  </Svg>
);

/* ---------- data ---------- */

const leftTabs = [
  { icon: "tree", title: "EtherCalc   Po", ls: 0.45 },
  { icon: "github", title: "anisharma07", ls: 0 },
  { icon: "github", title: "seetadev/ZK", ls: 0.2 },
  { icon: "remix", title: "Remix - Ethe", ls: 0.3 },
  { icon: "ionic", title: "Ionic App", plain: true },
];

const menuTabs = ["Edit", "Format", "Sort", "Audit", "Comment", "Names", "Clipboard", "Form", "Graph"];

const toolRow1 = [
  ["undo", "redo"],
  ["copy", "cut", "paste"],
  ["del", "wand"],
  ["lock", "pencil"],
  ["mergeDown", "splitRight"],
  ["newGrid", "cellIn", "cellMove"],
  ["alignL", "alignC", "alignR"],
  ["border"],
];
const toolRow2 = [
  ["blank", "invert"],
  ["rowYellow"],
  ["addRow", "addCol", "delRow", "delCol", "rowHide", "colHide"],
];

const columns = "ABCDEFGHI".split("");
const rowNumbers = Array.from({ length: 34 }, (_, i) => i + 1);
const cellValues = { B1: "sdf", A2: "sfdsf", B2: "f" };

/* ---------- composed parts ---------- */

const ToolGroups = ({ groups, pl, divider }) => (
  <ToolRow $pl={pl}>
    {groups.map((g, i) => (
      <React.Fragment key={i}>
        {i > 0 && <ToolDivider $w={divider} />}
        {g.map((n) => <ToolIcon key={n} name={n} />)}
      </React.Fragment>
    ))}
  </ToolRow>
);

const Spreadsheet = ({ cursor, peer, hint }) => (
  <SheetWrap>
    <Sheet>
      <SheetRow $h={19}>
        <Corner><Floppy /></Corner>
        {columns.map((c) => (
          <ColHead key={c} $on={cursor[0] === c} $last={c === "I"}>{c}</ColHead>
        ))}
      </SheetRow>
      {rowNumbers.map((n) => (
        <SheetRow key={n} $h={n % 4 === 0 ? 23 : 24}>
          <RowHead $on={cursor.slice(1) === String(n)} $lh={n % 4 === 1 || n % 4 === 2 ? 21 : 19}>{n}</RowHead>
          {columns.map((c) => (
            <Cell key={c} $last={c === "I"} $on={cursor === c + n} $peer={peer === c + n}>
              {cellValues[c + n]}
            </Cell>
          ))}
        </SheetRow>
      ))}
      <EditHint $x={hint.x} $y={hint.y}>
        <HintName $w={hint.nameW}>{cursor}</HintName>
        <HintText $w={hint.textW} $bg={hint.bg}>{hint.text}</HintText>
      </EditHint>
    </Sheet>
    <SheetScroll>
      <ScrollPart $h={8} $bg="#fff" $top />
      <ScrollPart $h={11} $bg="#dcdcdc"><ScrollBar $c="#120086" /></ScrollPart>
      <ScrollPart $h={24} $bg="#e9e9e9">
        <Svg w={16} h={8}><path d="M0 8l8-8 8 8z" fill="#a2a2a2" /></Svg>
      </ScrollPart>
      <ScrollPart $h={18} $bg="#dedede"><ScrollBar $c="#a2a2a2" /></ScrollPart>
    </SheetScroll>
  </SheetWrap>
);

const WebPage = ({ active, value, cursor, peer, hint }) => (
  <>
    <AppHeader>
      EtherCalc Voting
      <WalletButton $active={active}>Connect Wallet</WalletButton>
    </AppHeader>
    <Page>
      <Proposal>
        <Title>Test Proposal</Title>
        <Owner>Owner: <b>0xA2d54B3309...</b></Owner>
        <Description>Description: This proposal start on 7pm at 4 may 2025 and ends on 6 may 2025</Description>
        <Dates>
          <DateBadge $w={269}>Start Date: 5/4/2025, 6:59:00 PM</DateBadge>
          <DateBadge $w={263}>End Date: 5/6/2025, 6:59:00 PM</DateBadge>
        </Dates>
      </Proposal>
      <Votes>
        <CheckEmoji />
        <VoteText $l={7} $r={20}>0</VoteText>
        <VoteText $thin $r={22}>|</VoteText>
        <CrossEmoji />
        <VoteText $l={7}>0</VoteText>
      </Votes>
      <Counter>0</Counter>
      <Panel>
        <PanelBody $scroll={active}>
          <Menu>
            {menuTabs.map((t, i) => <MenuTab key={t} $on={i === 0}>{t}</MenuTab>)}
          </Menu>
          <Toolbar>
            <ToolGroups groups={toolRow1} pl={5} divider={17.8} />
            <ToolGroups groups={toolRow2} pl={0} divider={17} />
          </Toolbar>
          <FormulaRow>
            <Field $w={652} $h={35} $mr={5} $focus={active}>
              {active ? <><Spell>{value}</Spell><Caret /></> : value}
            </Field>
            <Fx />
            <DocScroll />
            <Chain />
            <Sigma />
          </FormulaRow>
          <SearchRow>
            <Field $w={240} $h={34} $hint>Search sheet…</Field>
            <Arrows><FindArrow /><FindArrow down /></Arrows>
          </SearchRow>
          <Spreadsheet cursor={cursor} peer={peer} hint={hint} />
        </PanelBody>
        {active && (
          <PageScroll>
            <Svg w={9} h={5}><path d="M0 5l4.500-5L9 5z" fill="#8b8b8b" /></Svg>
            <Thumb />
          </PageScroll>
        )}
      </Panel>
    </Page>
  </>
);

const UrlText = ({ active }) => (
  <Url $active={active}>
    <b>ether-calc-proposal-voting-po-c.vercel.app</b>
    /election?id=0xBDC86C693674CDC8a447e5A5CFa2600549E39442
  </Url>
);

const Nav = () => (
  <NavButtons>
    <Back c="#d6d6d6" />
    <Back c="#767676" flip />
    <Reload c="#d6d6d6" />
  </NavButtons>
);

const TabIcon = styled.div`
  position: relative;
`;

export default function App() {
  return (
    <Desktop>
      <Global />
      <TopBar>
        <Workspaces><Dot /><Dot $active /><Dot /></Workspaces>
        <Clock><span>May 4</span><span>18:27</span></Clock>
        <StatusItem $w={95} $gap={16} $ls={-0.3}><Cpu />2%</StatusItem>
        <StatusItem $w={96} $gap={10} $ls={-0.2}><Ram />33%</StatusItem>
        <StatusItem $w={98} $gap={15} $ls={-0.3}><Swap />0%</StatusItem>
        <StatusItem $w={95} $gap={6} $ls={-0.2}><NetArrow />0.5 kB</StatusItem>
        <StatusItem $w={115} $gap={6} $ls={-0.2}><NetArrow down />0.3 kB</StatusItem>
        <StatusItem $w={48}><Person /></StatusItem>
        <StatusItem $w={33}><Sun /></StatusItem>
        <StatusItem $w={31.5}><Wifi /></StatusItem>
        <StatusItem $w={31.5}><Volume /></StatusItem>
        <StatusItem $w={70} $gap={7}><Battery />66%</StatusItem>
      </TopBar>
      <Windows>
        <Window>
          <TabStrip>
            <WindowControls><Control kind="x" /><Control kind="m" /><Control kind="z" /></WindowControls>
            <SearchTabs><Chevron /></SearchTabs>
            {leftTabs.map((t, i) => (
              <TabBox key={i} $w={183} $sep={i < 4}>
                <Favicon kind={t.icon} />
                <TabTitle $w={112} $fade={!t.plain} $ls={t.ls}><span>{t.title}</span></TabTitle>
                <TabClose><Cross /></TabClose>
              </TabBox>
            ))}
            <TabBox $w={184}>
              <TabShape width="204" height="41" viewBox="0 0 204 41">
                <path d="M0 39.500c8 0 12-3 12-10V15q0-9 9-9h158q9 0 9 9v14.500c0 7 4 10 12 10V41H0z" fill="#323232" />
                <path d="M0 39.500c8 0 12-3 12-10V15q0-9 9-9h158q9 0 9 9v14.500c0 7 4 10 12 10" fill="none" stroke="#6a6a6a" />
              </TabShape>
              <TabIcon><Favicon kind="ionic" /></TabIcon>
              <TabTitle $w={112}><span>Ionic App</span></TabTitle>
              <TabClose><Cross /></TabClose>
            </TabBox>
            <NewTab><Plus c="#8a8a8a" /></NewTab>
          </TabStrip>
          <AddressBar>
            <Nav />
            <Omnibox $w={1022}>
              <SiteInfo><Tune /></SiteInfo>
              <UrlText />
              <OmniActions><Star /></OmniActions>
            </Omnibox>
            <ToolActions $pl={17}>
              <Puzzle />
              <ToolSep />
              <Avatar />
              <Gap $w={16} />
              <Dots />
            </ToolActions>
          </AddressBar>
          <WebPage
            value="dsf"
            cursor="A4"
            peer="D2"
            hint={{ x: 36.5, y: 33, nameW: 30, textW: 51.5, text: "dsf_", bg: "#ffffdd" }}
          />
        </Window>
        <Window $active>
          <TabStrip $active>
            <WindowControls><Control kind="x" active /><Control kind="m" active /><Control kind="z" active /></WindowControls>
            <SearchTabs $active><Chevron /></SearchTabs>
            <TabBox $w={234}>
              <TabShape width="254" height="40" viewBox="0 0 254 40">
                <path d="M0 40c8 0 12-3 12-10V15q0-9 9-9h214q9 0 9 9v15c0 7 4 10 12 10z" fill="#3c3c3c" />
              </TabShape>
              <TabIcon><Favicon kind="ionic" /></TabIcon>
              <TabTitle $w={166} $bright><span>Ionic App</span></TabTitle>
              <TabClose><Cross c="#e2e2e2" /></TabClose>
            </TabBox>
            <NewTab $active><Plus c="#d2d2d2" /></NewTab>
          </TabStrip>
          <AddressBar $active>
            <Nav />
            <Omnibox $w={1003} $active>
              <SiteInfo $active><Tune /></SiteInfo>
              <UrlText active />
              <OmniActions><EyeOff /><Star /></OmniActions>
            </Omnibox>
            <ToolActions $pl={13}>
              <Incognito><Spy />Incognito</Incognito>
              <Gap $w={16} />
              <Dots />
            </ToolActions>
          </AddressBar>
          <WebPage
            active
            value="afssf"
            cursor="D2"
            peer="A4"
            hint={{ x: 336, y: 17, nameW: 31, textW: 66, text: "afssf_", bg: "#f5f5d6" }}
          />
        </Window>
      </Windows>
    </Desktop>
  );
}
